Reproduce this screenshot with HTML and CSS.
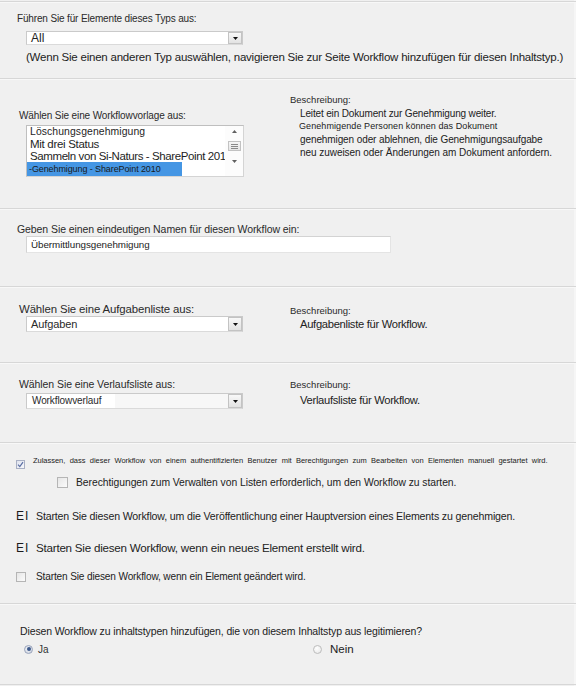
FILE: index.html
```html
<!DOCTYPE html>
<html lang="de">
<head>
<meta charset="utf-8">
<title>Workflow hinzufügen</title>
<link rel="stylesheet" href="styles.css">
</head>
<body>
<div class="page">

  <section class="sec sec-type">
    <div class="lbl lbl-type">Führen Sie für Elemente dieses Typs aus:</div>
    <div class="select sel-type">
      <span class="select-value val-all">All</span>
      <span class="select-btn"><svg width="5" height="3" viewBox="0 0 5 3"><polygon points="0,0 5,0 2.5,3" fill="#111"/></svg></span>
    </div>
    <div class="note">(Wenn Sie einen anderen Typ auswählen, navigieren Sie zur Seite Workflow hinzufügen für diesen Inhaltstyp.)</div>
  </section>

  <section class="sec sec-split sec-template">
    <div class="col-main main-template">
      <div class="lbl lbl-template">Wählen Sie eine Workflowvorlage aus:</div>
      <div class="listbox">
        <div class="list-items">
          <div class="item item-1">Löschungsgenehmigung</div>
          <div class="item item-2">Mit drei Status</div>
          <div class="item item-3">Sammeln von Si-Naturs - SharePoint 201</div>
          <div class="item item-sel"><span class="sel-bar">-Genehmigung - SharePoint 2010</span></div>
        </div>
        <div class="scrollbar">
          <svg class="arrow arrow-up" width="5" height="3" viewBox="0 0 5 3"><polygon points="0,3 5,3 2.5,0" fill="#606060"/></svg>
          <div class="thumb"><span></span><span></span><span></span></div>
          <svg class="arrow arrow-down" width="5" height="3" viewBox="0 0 5 3"><polygon points="0,0 5,0 2.5,3" fill="#606060"/></svg>
        </div>
      </div>
    </div>
    <div class="col-desc desc-template">
      <div class="desc-head">Beschreibung:</div>
      <div class="desc-body">
        <div class="dl dl-1">Leitet ein Dokument zur Genehmigung weiter.</div>
        <div class="dl dl-2">Genehmigende Personen können das Dokument</div>
        <div class="dl dl-3">genehmigen oder ablehnen, die Genehmigungsaufgabe</div>
        <div class="dl dl-4">neu zuweisen oder Änderungen am Dokument anfordern.</div>
      </div>
    </div>
  </section>

  <section class="sec sec-name">
    <div class="lbl lbl-name">Geben Sie einen eindeutigen Namen für diesen Workflow ein:</div>
    <div class="textbox">Übermittlungsgenehmigung</div>
  </section>

  <section class="sec sec-split sec-tasks">
    <div class="col-main main-tasks">
      <div class="lbl lbl-tasks">Wählen Sie eine Aufgabenliste aus:</div>
      <div class="select sel-list">
        <span class="select-value val-tasks">Aufgaben</span>
        <span class="select-btn"><svg width="5" height="3" viewBox="0 0 5 3"><polygon points="0,0 5,0 2.5,3" fill="#111"/></svg></span>
      </div>
    </div>
    <div class="col-desc desc-tasks">
      <div class="desc-head">Beschreibung:</div>
      <div class="dl dl-tasks">Aufgabenliste für Workflow.</div>
    </div>
  </section>

  <section class="sec sec-split sec-history">
    <div class="col-main main-history">
      <div class="lbl lbl-history">Wählen Sie eine Verlaufsliste aus:</div>
      <div class="select sel-list sel-history">
        <span class="select-value val-history"><span class="val-box">Workflowverlauf</span></span>
        <span class="select-btn"><svg width="5" height="3" viewBox="0 0 5 3"><polygon points="0,0 5,0 2.5,3" fill="#111"/></svg></span>
      </div>
    </div>
    <div class="col-desc desc-history">
      <div class="desc-head">Beschreibung:</div>
      <div class="dl dl-history">Verlaufsliste für Workflow.</div>
    </div>
  </section>

  <section class="sec sec-options">
    <div class="opt opt-manual">
      <span class="cb cb-checked cb-small"><svg width="7" height="7" viewBox="0 0 7 7"><path d="M1 3.6 L2.8 5.6 L6 1.2" fill="none" stroke="#5b6fa3" stroke-width="1.2"/></svg></span>
      <span class="opt-text txt-manual">Zulassen, dass dieser Workflow von einem authentifizierten Benutzer mit Berechtigungen zum Bearbeiten von Elementen manuell gestartet wird.</span>
    </div>
    <div class="opt opt-perm">
      <span class="cb cb-perm"></span>
      <span class="opt-text txt-perm">Berechtigungen zum Verwalten von Listen erforderlich, um den Workflow zu starten.</span>
    </div>
    <div class="opt opt-major">
      <span class="ei">EI</span>
      <span class="opt-text txt-major">Starten Sie diesen Workflow, um die Veröffentlichung einer Hauptversion eines Elements zu genehmigen.</span>
    </div>
    <div class="opt opt-new">
      <span class="ei">EI</span>
      <span class="opt-text txt-new">Starten Sie diesen Workflow, wenn ein neues Element erstellt wird.</span>
    </div>
    <div class="opt opt-change">
      <span class="cb cb-change"></span>
      <span class="opt-text txt-change">Starten Sie diesen Workflow, wenn ein Element geändert wird.</span>
    </div>
  </section>

  <section class="sec sec-inherit">
    <div class="lbl lbl-inherit">Diesen Workflow zu inhaltstypen hinzufügen, die von diesem Inhaltstyp aus legitimieren?</div>
    <div class="radios">
      <div class="radio-opt radio-yes">
        <span class="radio radio-on"><span class="dot"></span></span>
        <span class="radio-text txt-yes">Ja</span>
      </div>
      <div class="radio-opt radio-no">
        <span class="radio"></span>
        <span class="radio-text txt-no">Nein</span>
      </div>
    </div>
  </section>

</div>
</body>
</html>
```

FILE: styles.css
```css
html, body {
  margin: 0;
  padding: 0;
}

body {
  background: #f0f0f0;
  font-family: "Liberation Sans", Arial, sans-serif;
  color: #2a2a2a;
}

.page {
  width: 576px;
  height: 686px;
  padding-top: 1px;
  box-sizing: border-box;
  box-shadow: inset -2px 0 0 #f6f6f6;
}

.sec {
  border-top: 1px solid #d7d7d7;
  box-shadow: inset 0 1px 0 #f8f8f8;
  box-sizing: border-box;
  padding-left: 17px;
}

.sec-split {
  display: flex;
}

.col-main {
  width: 273px;
  flex: none;
}

.col-desc {
  flex: 1;
}

.lbl {
  line-height: 12px;
  white-space: nowrap;
}

/* ---------- select boxes ---------- */
.select {
  display: flex;
  width: 217px;
  height: 14px;
  margin-left: 9px;
  box-sizing: border-box;
  border: 1px solid #cacaca;
  border-bottom-color: #dadada;
  background: #fff;
}

.select-value {
  flex: 1;
  padding-left: 4px;
  white-space: nowrap;
  overflow: hidden;
}

.select-btn {
  width: 14px;
  flex: none;
  box-sizing: border-box;
  border: 1px solid #c3c3c3;
  background: linear-gradient(#f8f8f8, #e2e2e2);
  display: flex;
  align-items: center;
  justify-content: center;
}

.sel-list {
  height: 16px;
}

/* ---------- section 1 ---------- */
.sec-type {
  height: 77px;
  padding-top: 10px;
}

.lbl-type {
  font-size: 10px;
  letter-spacing: -0.15px;
  line-height: 13px;
}

.sel-type {
  margin-top: 6px;
}

.val-all {
  font-size: 12px;
  line-height: 12px;
  color: #222;
}

.note {
  margin-top: 6px;
  margin-left: 9px;
  font-size: 11.5px;
  letter-spacing: -0.22px;
  line-height: 13px;
  white-space: nowrap;
  color: #222;
}

/* ---------- section 2 ---------- */
.sec-template {
  height: 130px;
}

.main-template {
  padding-top: 31px;
}

.lbl-template {
  padding-left: 2px;
  font-size: 10px;
  letter-spacing: -0.12px;
}

.listbox {
  display: flex;
  width: 218px;
  height: 52px;
  margin-top: 3px;
  margin-left: 9px;
  box-sizing: border-box;
  border: 1px solid #bfbfbf;
  border-right-color: #d4d4d4;
  border-bottom-color: #d4d4d4;
  background: #fff;
}

.list-items {
  width: 198px;
  flex: none;
  overflow: hidden;
}

.item {
  height: 12px;
  line-height: 12px;
  padding-left: 3px;
  white-space: nowrap;
  color: #1e1e1e;
}

.item-1 {
  font-size: 10.4px;
  letter-spacing: 0.1px;
}

.item-2 {
  font-size: 11.5px;
  letter-spacing: -0.3px;
}

.item-3 {
  font-size: 11.5px;
  letter-spacing: -0.4px;
}

.item-sel {
  height: 14px;
  padding-left: 0;
}

.sel-bar {
  display: block;
  width: 155px;
  height: 14px;
  line-height: 14px;
  padding-left: 2px;
  box-sizing: border-box;
  background: #4596e4;
  font-size: 9px;
  letter-spacing: -0.1px;
  color: #1a1a1a;
}

.scrollbar {
  flex: 1;
  display: flex;
  flex-direction: column;
  align-items: center;
  padding-top: 4px;
  background: #fcfcfc;
}

.arrow {
  display: block;
}

.thumb {
  width: 13px;
  height: 10px;
  margin-top: 8px;
  box-sizing: border-box;
  border: 1px solid #c2c2c2;
  background: linear-gradient(#f6f6f6, #e6e6e6);
  display: flex;
  flex-direction: column;
  justify-content: center;
  align-items: center;
  gap: 1px;
}

.thumb span {
  display: block;
  width: 7px;
  height: 1px;
  background: #8a8a8a;
}

.arrow-down {
  margin-top: 9px;
}

.desc-template {
  padding-top: 15px;
}

.desc-head {
  font-size: 9.5px;
  line-height: 12px;
  color: #2a2a2a;
}

.desc-body {
  margin-top: 1px;
  padding-left: 10px;
}

.dl {
  line-height: 13px;
  white-space: nowrap;
  color: #222;
}

.dl-1 {
  font-size: 10px;
  letter-spacing: -0.15px;
}

.dl-2 {
  font-size: 9px;
  letter-spacing: 0.08px;
  margin-left: -1px;
}

.dl-3 {
  font-size: 10px;
  letter-spacing: -0.1px;
}

.dl-4 {
  font-size: 10px;
  letter-spacing: -0.05px;
}

/* ---------- section 3 ---------- */
.sec-name {
  height: 78px;
  padding-top: 14px;
}

.lbl-name {
  font-size: 10.5px;
  letter-spacing: -0.08px;
}

.textbox {
  width: 365px;
  height: 17px;
  margin-top: 1px;
  margin-left: 9px;
  box-sizing: border-box;
  border: 1px solid #d3d3d3;
  border-right-color: #e4e4e4;
  border-bottom-color: #e4e4e4;
  background: #fff;
  padding-left: 4px;
  font-size: 9.8px;
  letter-spacing: -0.05px;
  line-height: 15px;
  color: #222;
}

/* ---------- section 4 ---------- */
.sec-tasks {
  height: 76px;
}

.main-tasks {
  padding-top: 16px;
}

.lbl-tasks {
  padding-left: 2px;
  font-size: 11.4px;
  letter-spacing: -0.12px;
}

.sel-list {
  margin-top: 1px;
}

.val-tasks {
  font-size: 11px;
  line-height: 14px;
  letter-spacing: -0.1px;
}

.desc-tasks {
  padding-top: 18px;
}

.dl-tasks,
.dl-history {
  margin-top: 1px;
  padding-left: 10px;
  font-size: 11.2px;
  letter-spacing: -0.3px;
}

/* ---------- section 5 ---------- */
.sec-history {
  height: 80px;
}

.main-history {
  padding-top: 15px;
}

.lbl-history {
  padding-left: 2px;
  font-size: 10.5px;
  letter-spacing: -0.08px;
}

.sel-history {
  margin-top: 3px;
  background: #f7f7f7;
}

.val-history {
  padding-left: 0;
}

.val-box {
  display: block;
  width: 88px;
  height: 14px;
  padding-left: 5px;
  box-sizing: border-box;
  background: #fff;
  font-size: 10px;
  line-height: 14px;
  letter-spacing: -0.1px;
}

.desc-history {
  padding-top: 16px;
}

.dl-history {
  margin-top: 3px;
}

/* ---------- section 6 ---------- */
.sec-options {
  height: 161px;
  padding-top: 13px;
  padding-left: 0;
}

.opt {
  display: flex;
  align-items: center;
  white-space: nowrap;
}

.opt-text {
  color: #222;
}

.cb {
  display: flex;
  align-items: center;
  justify-content: center;
  box-sizing: border-box;
  border: 1px solid #b5b5b5;
  background: linear-gradient(135deg, #e6e6e6, #fbfbfb);
  flex: none;
}

.opt-manual {
  align-items: flex-start;
  padding-left: 16px;
  height: 14px;
}

.cb-small {
  width: 9px;
  height: 9px;
  margin-top: 4px;
  border-color: #a9b0c4;
  background: linear-gradient(135deg, #dfe3ee, #f7f8fb);
}

.txt-manual {
  margin-left: 8px;
  font-size: 7.5px;
  line-height: 10px;
  word-spacing: 2.3px;
  letter-spacing: -0.02px;
}

.opt-perm {
  margin-top: 6px;
  padding-left: 57px;
  height: 13px;
}

.cb-perm {
  width: 11px;
  height: 11px;
}

.txt-perm {
  margin-left: 8px;
  font-size: 10.35px;
  letter-spacing: -0.05px;
  line-height: 13px;
}

.ei {
  width: 20px;
  flex: none;
  font-size: 12px;
  letter-spacing: 1px;
  color: #1a1a1a;
}

.opt-major {
  margin-top: 20px;
  padding-left: 16px;
  height: 14px;
}

.txt-major {
  font-size: 10.6px;
  letter-spacing: -0.15px;
  line-height: 14px;
}

.opt-new {
  margin-top: 18px;
  padding-left: 16px;
  height: 14px;
}

.txt-new {
  font-size: 11.6px;
  letter-spacing: -0.22px;
  line-height: 14px;
}

.opt-change {
  margin-top: 15px;
  padding-left: 16px;
  height: 14px;
}

.cb-change {
  width: 10px;
  height: 10px;
}

.txt-change {
  margin-left: 10px;
  font-size: 10.1px;
  letter-spacing: -0.15px;
  line-height: 14px;
}

/* ---------- section 7 ---------- */
.sec-inherit {
  height: 82px;
  padding-top: 21px;
  padding-left: 20px;
  border-bottom: 1px solid #d7d7d7;
}

.lbl-inherit {
  font-size: 10.5px;
  letter-spacing: -0.12px;
  color: #222;
}

.radios {
  display: flex;
  margin-top: 5px;
  padding-left: 4px;
}

.radio-opt {
  display: flex;
  align-items: center;
  height: 14px;
}

.radio-yes {
  width: 289px;
}

.radio {
  width: 9px;
  height: 9px;
  box-sizing: border-box;
  border-radius: 50%;
  border: 1px solid #bdbdbd;
  background: radial-gradient(circle at 40% 35%, #ffffff, #e4e4e4);
  display: flex;
  align-items: center;
  justify-content: center;
  flex: none;
}

.radio-on {
  border-color: #9aa4bb;
  background: radial-gradient(circle at 40% 35%, #f2f4f8, #c9d0de);
}

.dot {
  width: 4px;
  height: 4px;
  border-radius: 50%;
  background: #3e5a8c;
}

.txt-yes {
  margin-left: 5px;
  font-size: 10px;
  color: #333;
}

.txt-no {
  margin-left: 8px;
  font-size: 11.5px;
  color: #222;
}
```
